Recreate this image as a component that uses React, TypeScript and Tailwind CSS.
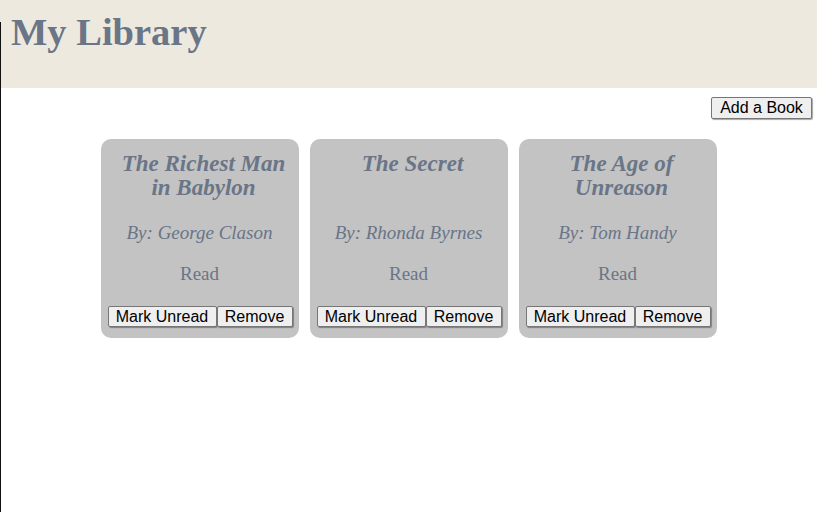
import React from "react";

const books = [
  { title: "The Richest Man in Babylon", author: "George Clason" },
  { title: "The Secret", author: "Rhonda Byrnes" },
  { title: "The Age of Unreason", author: "Tom Handy" },
];

export default function App() {
  return (
    <div className="min-h-[512px] bg-white font-['Liberation_Serif','Times_New_Roman',serif] relative">
      <div className="absolute left-0 top-[22px] w-[1px] h-[490px] bg-[#111]" />
      <header className="bg-[#ede9df] h-[88px] pl-[11px] pt-[10px]">
        <h1 className="text-[38.5px] leading-[44px] font-bold text-[#6a7587]">My Library</h1>
      </header>
      <div className="flex justify-end pr-[5px] pt-[9px]">
        <button className="h-[22px] w-[101px] flex items-center justify-center bg-[#efefef] text-black text-[16px] leading-[18px] border border-[#767676] rounded-[2px] shadow-[1px_1px_1px_rgba(0,0,0,0.35)] font-['Liberation_Sans',Arial,sans-serif]">
          Add a Book
        </button>
      </div>
      <div className="flex justify-center gap-[11px] mt-[20px]">
        {books.map((b) => (
          <div key={b.title} className="w-[198px] h-[199px] bg-[#c3c3c3] rounded-[10px] flex flex-col items-center pt-[13px] text-[#6a7587]">
            <h2 className="h-[48px] w-[176px] ml-[8px] text-center italic font-bold text-[23px] leading-[24px]">{b.title}</h2>
            <p className="mt-[22px] italic text-[19px] leading-[22px] text-center">By: {b.author}</p>
            <p className="mt-[19px] text-[19px] leading-[22px] text-center">Read</p>
            <div className="flex mt-[21px] ml-[1px]">
              <button className="h-[21px] w-[109px] flex items-center justify-center bg-[#efefef] text-black text-[16px] leading-[17px] border border-[#767676] rounded-[2px] shadow-[1px_1px_1px_rgba(0,0,0,0.35)] font-['Liberation_Sans',Arial,sans-serif]">
                Mark Unread
              </button>
              <button className="h-[21px] w-[76px] flex items-center justify-center bg-[#efefef] text-black text-[16px] leading-[17px] border border-[#767676] rounded-[2px] shadow-[1px_1px_1px_rgba(0,0,0,0.35)] font-['Liberation_Sans',Arial,sans-serif]">
                Remove
              </button>
            </div>
          </div>
        ))}
      </div>
    </div>
  );
}
